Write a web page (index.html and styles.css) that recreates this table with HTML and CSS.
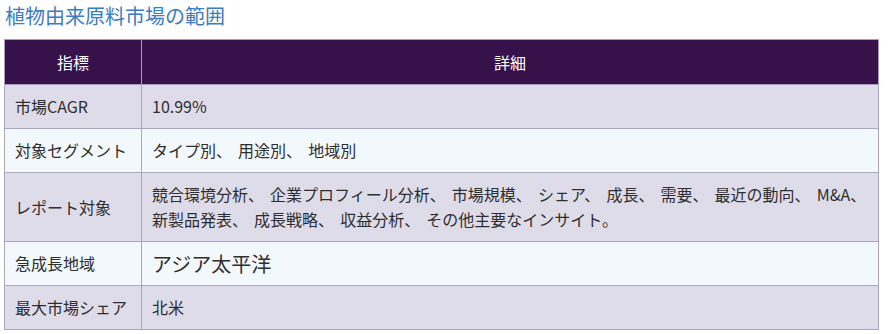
FILE: index.html
```html
<!DOCTYPE html>
<html lang="ja">
<head>
<meta charset="utf-8">
<link rel="stylesheet" href="styles.css">
</head>
<body>
<div class="page">
  <h2 class="title">植物由来原料市場の範囲</h2>
  <table class="scope">
    <thead>
      <tr><th class="col-key">指標</th><th>詳細</th></tr>
    </thead>
    <tbody>
      <tr class="odd"><td>市場CAGR</td><td>10.99%</td></tr>
      <tr class="even"><td>対象セグメント</td><td>タイプ別、 用途別、 地域別</td></tr>
      <tr class="odd"><td>レポート対象</td><td>競合環境分析、 企業プロフィール分析、 市場規模、 シェア、 成長、 需要、 最近の動向、 M&amp;A、 新製品発表、 成長戦略、 収益分析、 その他主要なインサイト。</td></tr>
      <tr class="even"><td>急成長地域</td><td class="big">アジア太平洋</td></tr>
      <tr class="odd"><td>最大市場シェア</td><td>北米</td></tr>
    </tbody>
  </table>
</div>
</body>
</html>
```

FILE: styles.css
```css
html, body {
  margin: 0;
  padding: 0;
  background: #ffffff;
}
.page {
  padding: 2px 10px 0 4px;
  font-family: "Noto Sans CJK JP", "Noto Sans", sans-serif;
}
.title {
  margin: 0 0 9px 1px;
  font-size: 20px;
  font-weight: normal;
  line-height: 28px;
  color: #3b7cc0;
}
.scope {
  width: 875px;
  border-collapse: collapse;
  font-size: 16px;
  color: #2e2e2e;
}
.scope th {
  background: #371149;
  color: #ffffff;
  font-weight: normal;
  height: 44px;
  padding: 0 10px;
  border: 1px solid #a79cc2;
  text-align: center;
}
.scope .col-key {
  width: 116px;
}
.scope td {
  padding: 9px 10px;
  line-height: 25px;
  border: 1px solid #aba5c0;
  text-align: left;
  vertical-align: middle;
  word-spacing: 2.5px;
}
.scope .odd td {
  background: #dfdcea;
}
.scope .even td {
  background: #f3f8fc;
}
.scope td.big {
  font-size: 20px;
}
```
